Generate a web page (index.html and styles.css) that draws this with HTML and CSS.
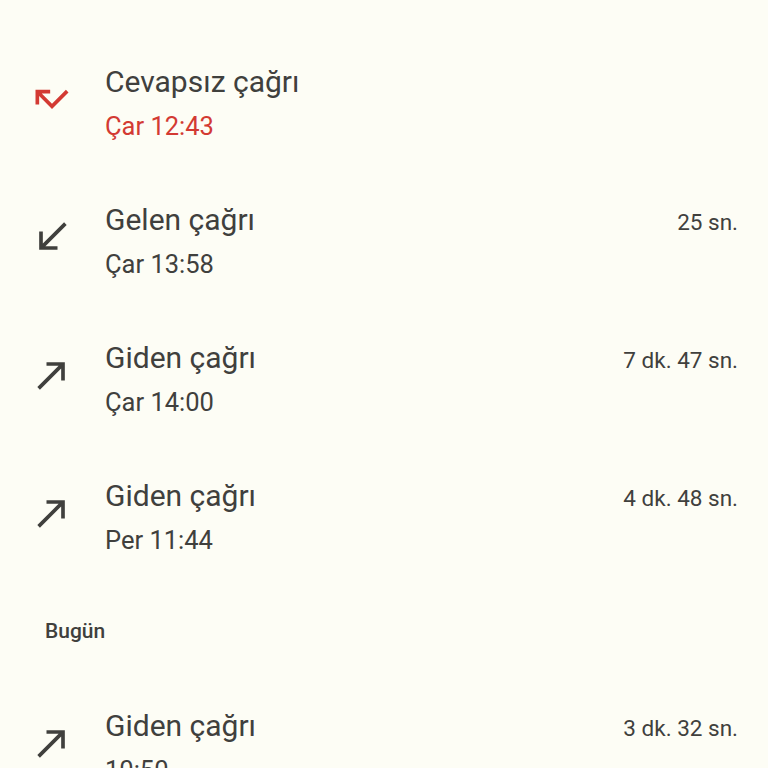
FILE: index.html
```html
<!DOCTYPE html>
<html lang="tr">
<head>
  <meta charset="UTF-8">
  <meta name="viewport" content="width=device-width, initial-scale=1.0">
  <title>Arama geçmişi</title>
  <link rel="stylesheet" href="styles.css">
</head>
<body>
  <div class="list">
    <!-- Missed call -->
    <div class="row">
      <svg class="icon missed" viewBox="0 0 24 24"><path d="M19.59 7L12 14.59 6.41 9H11V7H3v8h2v-4.59l7 7 9-9z"/></svg>
      <div class="info">
        <div class="title">Cevapsız çağrı</div>
        <div class="sub missed">Çar 12:43</div>
      </div>
    </div>

    <div class="row">
      <svg class="icon" viewBox="0 0 24 24"><path d="M20 5.41L18.59 4 7 15.59V9H5v10h10v-2H8.41z"/></svg>
      <div class="info">
        <div class="title">Gelen çağrı</div>
        <div class="sub">Çar 13:58</div>
      </div>
      <div class="duration">25 sn.</div>
    </div>

    <div class="row">
      <svg class="icon" viewBox="0 0 24 24"><path d="M9 5v2h6.59L4 18.59 5.41 20 17 8.41V15h2V5z"/></svg>
      <div class="info">
        <div class="title">Giden çağrı</div>
        <div class="sub">Çar 14:00</div>
      </div>
      <div class="duration">7 dk. 47 sn.</div>
    </div>

    <div class="row">
      <svg class="icon" viewBox="0 0 24 24"><path d="M9 5v2h6.59L4 18.59 5.41 20 17 8.41V15h2V5z"/></svg>
      <div class="info">
        <div class="title">Giden çağrı</div>
        <div class="sub">Per 11:44</div>
      </div>
      <div class="duration">4 dk. 48 sn.</div>
    </div>

    <div class="section">Bugün</div>

    <div class="row">
      <svg class="icon" viewBox="0 0 24 24"><path d="M9 5v2h6.59L4 18.59 5.41 20 17 8.41V15h2V5z"/></svg>
      <div class="info">
        <div class="title">Giden çağrı</div>
        <div class="sub">10:50</div>
      </div>
      <div class="duration">3 dk. 32 sn.</div>
    </div>
  </div>
</body>
</html>
```

FILE: styles.css
```css
/* Base */
body {
  margin: 0;
  padding: 0;
  background: #fdfdf5;
  font-family: Roboto, "Noto Sans", sans-serif;
  color: #40403d;
  height: 768px;
  overflow: hidden;
}

.list {
  padding-top: 35px;
}

.row {
  display: flex;
  align-items: flex-start;
  padding: 25px 30px 25px 30px;
}

.icon {
  width: 44px;
  height: 44px;
  flex-shrink: 0;
  margin-top: 17px;
  fill: #40403d;
}

.icon.missed {
  fill: #d33a33;
}

.info {
  flex: 1;
  margin-left: 31px;
}

.title {
  font-size: 30px;
  line-height: 44px;
}

.sub {
  font-size: 25.5px;
  line-height: 44px;
}

.sub.missed {
  color: #d33a33;
}

.duration {
  font-size: 22.5px;
  line-height: 44px;
  margin-top: 2px;
}

.section {
  font-size: 21px;
  font-weight: 500;
  line-height: 28px;
  padding: 30px 45px 34px;
}
```
